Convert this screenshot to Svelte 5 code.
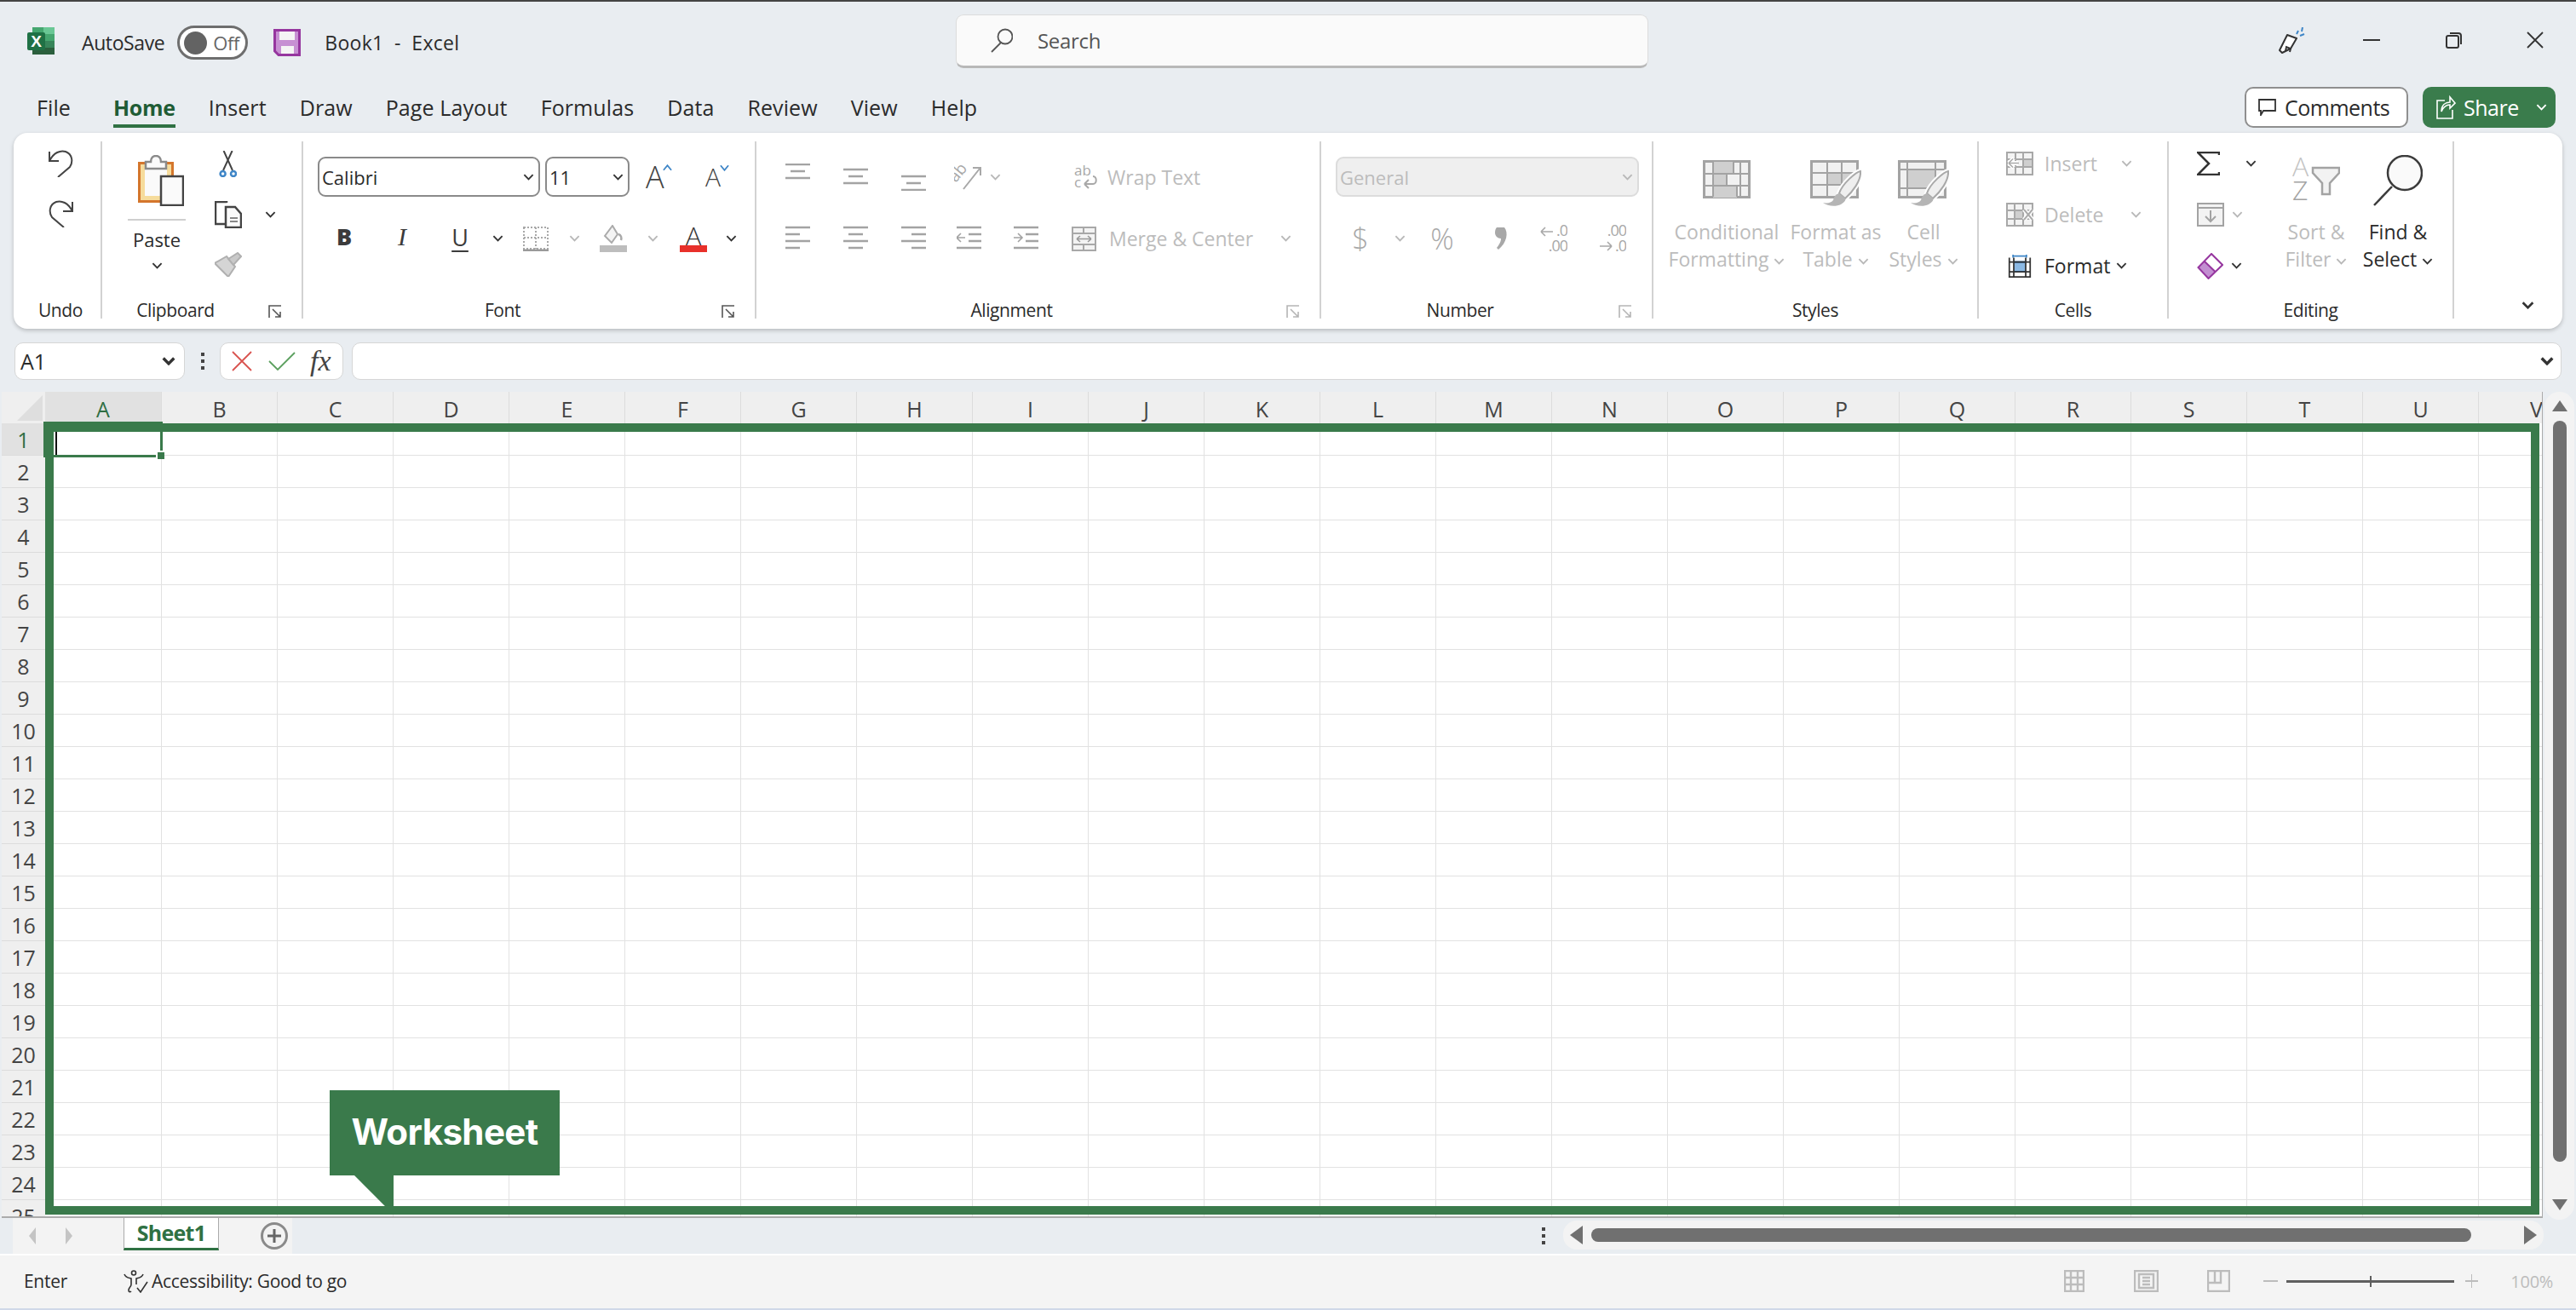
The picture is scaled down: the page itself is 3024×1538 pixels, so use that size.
<script>
  const tabs = ["File", "Home", "Insert", "Draw", "Page Layout", "Formulas", "Data", "Review", "View", "Help"];
  const cols = "ABCDEFGHIJKLMNOPQRSTUV".split("");
  const rows = Array.from({ length: 25 }, (_, i) => i + 1);

  const alignRow1 = [
    { cls: "", lines: [[0, 29, 1], [6, 23, 9], [0, 29, 17]] },
    { cls: "", lines: [[0, 29, 7], [6, 23, 15], [0, 29, 23]] },
    { cls: "", lines: [[0, 29, 15], [6, 23, 23], [0, 29, 31]] }
  ];
  const alignRow2 = [
    [[0, 29, 3], [0, 17, 11], [0, 29, 19], [0, 17, 27]],
    [[0, 29, 3], [6, 23, 11], [0, 29, 19], [6, 23, 27]],
    [[0, 29, 3], [12, 29, 11], [0, 29, 19], [12, 29, 27]]
  ];
</script>

{#snippet chev(dim = false)}
  <svg class="chev" class:dim viewBox="0 0 14 8"><polyline points="1.5,1 7,6.5 12.5,1" /></svg>
{/snippet}

{#snippet launcher()}
  <svg class="launch" viewBox="0 0 16 16"><path d="M15 1H1V15M5 5L14 14M14 8V14H8" /></svg>
{/snippet}

{#snippet lines(list)}
  {#each list as l}
    <line x1={l[0]} x2={l[1]} y1={l[2]} y2={l[2]} />
  {/each}
{/snippet}

{#snippet brush()}
  <path d="M59 13C54 14 38 27 34 39L41 45C50 37 60 24 59 13Z" fill="#f0f0f0" stroke="#fff" stroke-width="6" />
  <path d="M59 13C54 14 38 27 34 39L41 45C50 37 60 24 59 13Z" fill="#efefef" stroke="#a9a9a9" stroke-width="2" />
  <path d="M34 39C29 40 28 44 27 47C25 50 20 51 15 50C20 54 30 55 36 52C41 49 42 47 41 45Z" fill="#b5b5b5" />
{/snippet}

<div class="page">
  <div class="topline"></div>

  <header class="title">
    <div class="t-left">
      <svg class="xl" viewBox="0 0 32 32">
        <rect x="6" y="0" width="26" height="32" rx="2" fill="#33805a" />
        <rect x="19" y="0" width="13" height="8" fill="#6ac795" />
        <rect x="6" y="0" width="13" height="8" fill="#45a66f" />
        <rect x="19" y="8" width="13" height="8" fill="#45a66f" />
        <rect x="19" y="16" width="13" height="8" fill="#37855a" />
        <rect x="6" y="24" width="26" height="8" fill="#2b5f3d" />
        <rect x="0" y="6" width="21" height="21" rx="2" fill="#1f7145" />
        <text x="10.5" y="22.5" class="xl-x">X</text>
      </svg>
      <span class="autosave">AutoSave</span>
      <div class="toggle"><i></i><span>Off</span></div>
      <svg class="save" viewBox="0 0 32 32">
        <path d="M1.5 1.5H30.5V30.5H6L1.5 26Z" fill="#c790d3" stroke="#96369f" stroke-width="3" />
        <rect x="7" y="3" width="18" height="10" fill="#f5f5f5" />
        <rect x="9" y="20" width="15" height="9" fill="#f5f5f5" />
      </svg>
      <span class="book">Book1&nbsp; -&nbsp; Excel</span>
    </div>
    <div class="search">
      <svg viewBox="0 0 26 29"><circle cx="17" cy="10" r="8.5" /><line x1="12" y1="17" x2="1" y2="28" /></svg>
      <span>Search</span>
    </div>
    <div class="win">
      <svg class="pen" viewBox="0 0 31 31">
        <path d="M1 27L10 9L21 13L14 25L4 30Z" fill="#fff" stroke="#333" stroke-width="2" stroke-linejoin="round" />
        <path d="M8 28L9 23L14 25L13 29" fill="none" stroke="#333" stroke-width="2" />
        <path d="M21 8L23 4M25 10L30 8M27 5L28 0" stroke="#3f86c7" stroke-width="2" fill="none" />
      </svg>
      <svg class="min" viewBox="0 0 20 2"><line x1="0" y1="1" x2="20" y2="1" /></svg>
      <svg class="rest" viewBox="0 0 19 19">
        <rect x="1" y="4" width="14" height="14" rx="2" />
        <path d="M5 1H15C17 1 18 2 18 4V14" />
      </svg>
      <svg class="close" viewBox="0 0 20 20"><path d="M1 1L19 19M19 1L1 19" /></svg>
    </div>
  </header>

  <nav class="tabs">
    {#each tabs as t}
      <span class="tab" class:on={t === "Home"}>{t}</span>
    {/each}
    <div class="actions">
      <button class="comments">
        <svg viewBox="0 0 21 20"><path d="M1 1H20V14H6L3 19V14H1Z" /></svg>
        Comments
      </button>
      <button class="share">
        <svg viewBox="0 0 24 30"><path d="M11 7H2V28H20V18M7 20C7 12 12 9 17 9V3L23 10L17 16V12C12 12 9 15 7 20Z" /></svg>
        Share
        <svg class="chev white" viewBox="0 0 14 8"><polyline points="1.5,1 7,6.5 12.5,1" /></svg>
      </button>
    </div>
  </nav>

  <section class="ribbon">
    <div class="grp g-undo">
      <div class="tools undo-col">
        <svg viewBox="0 0 29 32"><path d="M1 2V13H12M1 13C6 3 14 0 20 2C28 5 29 14 25 20L11 32" /></svg>
        <svg viewBox="0 0 29 32"><path d="M28 2V13H17M28 13C23 3 15 0 9 2C1 5 0 14 4 20L18 32" /></svg>
      </div>
      <div class="lbl undo-lbl">Undo</div>
    </div>

    <div class="grp g-clip">
      <div class="tools clip">
        <div class="paste">
          <svg class="paste-ico" viewBox="0 0 54 60">
            <rect x="1.5" y="9.5" width="39" height="45" fill="#f6dc9c" stroke="#d4762c" stroke-width="3" />
            <rect x="8" y="16" width="26" height="32" fill="#fafafa" />
            <path d="M9 16V8H15C15 3 18 1 21 1C24 1 27 3 27 8H33V16Z" fill="#fafafa" stroke="#8a8a8a" stroke-width="2.5" />
            <rect x="27" y="25" width="26" height="34" fill="#fafafa" stroke="#444" stroke-width="2.5" />
          </svg>
          <div class="paste-line"></div>
          <span>Paste</span>
          <div class="paste-chev">{@render chev()}</div>
        </div>
        <div class="clip-col">
          <svg class="cut" viewBox="0 0 21 31">
            <path d="M5.6 0L16 23M15.6 0L5 23" fill="none" stroke="#444" stroke-width="2" />
            <circle cx="4.6" cy="27" r="3" fill="none" stroke="#3f86c7" stroke-width="2.5" />
            <circle cx="17" cy="27" r="3" fill="none" stroke="#3f86c7" stroke-width="2.5" />
          </svg>
          <div class="copy-row">
            <svg class="copy" viewBox="0 0 32 32">
              <path d="M14 2V1H1V27H12" fill="none" stroke="#444" stroke-width="2.5" />
              <path d="M13 7H24L31 15V31H13Z" fill="#fafafa" stroke="#444" stroke-width="2.5" />
              <path d="M18 20H27M18 24H27" stroke="#888" stroke-width="2" />
            </svg>
            {@render chev()}
          </div>
          <svg class="painter" viewBox="0 0 32 29">
            <path d="M0 13L14 5L24 17L16 29Z" fill="#d5d5d5" stroke="#b0b0b0" stroke-width="2" />
            <path d="M16 8L27 1L31 5L22 15Z" fill="#c9c9c9" stroke="#b0b0b0" stroke-width="2" />
          </svg>
        </div>
      </div>
      <div class="lbl pad">Clipboard</div>
      {@render launcher()}
    </div>

    <div class="grp g-font">
      <div class="tools">
        <div class="font-r1">
          <div class="select font"><span>Calibri</span>{@render chev()}</div>
          <div class="select size"><span>11</span>{@render chev()}</div>
          <div class="grow">A<svg viewBox="0 0 12 8"><polyline points="1,7 6,1 11,7" /></svg></div>
          <div class="shrink">A<svg viewBox="0 0 12 8"><polyline points="1,1 6,7 11,1" /></svg></div>
        </div>
        <div class="font-r2">
          <b class="fb">B</b>
          <i class="fi">I</i>
          <u class="fu">U</u>
          {@render chev()}
          <svg class="borders" viewBox="0 0 30 29">
            <rect x="1" y="1" width="28" height="25" fill="none" stroke="#a8a8a8" stroke-width="2" stroke-dasharray="2 2" />
            <path d="M15 1V26M1 13H29" stroke="#a8a8a8" stroke-width="2" stroke-dasharray="2 2" />
            <path d="M0 28H30" stroke="#9a9a9a" stroke-width="3" />
          </svg>
          {@render chev(true)}
          <svg class="fill" viewBox="0 0 32 32">
            <path d="M6 13L15 1L21 11L14 21Z" fill="#f4f4f4" stroke="#aaa" stroke-width="2" />
            <path d="M22 11C25 12 26 15 25 18" fill="none" stroke="#aaa" stroke-width="2.5" />
            <rect x="0" y="24" width="32" height="8" fill="#bdbdbd" />
          </svg>
          {@render chev(true)}
          <div class="fcolor"><span>A</span><i></i></div>
          {@render chev()}
        </div>
      </div>
      <div class="lbl pad">Font</div>
      {@render launcher()}
    </div>

    <div class="grp g-align dim-text">
      <div class="tools">
        <div class="al-r1">
          {#each alignRow1 as a}
            <svg class="al" viewBox="0 0 29 32">{@render lines(a.lines)}</svg>
          {/each}
          <svg class="orient" viewBox="0 0 34 30">
            <text x="2" y="22" transform="rotate(-50 2 22)" class="orient-t">ab</text>
            <path d="M11 29L30 5M22 4H31V13" fill="none" stroke="#a8a8a8" stroke-width="2" />
          </svg>
          <span class="ch1">{@render chev(true)}</span>
          <svg class="wrap-i" viewBox="0 0 28 28">
            <text x="0" y="12" class="wrap-t">ab</text>
            <text x="0" y="26" class="wrap-t">c</text>
            <path d="M12 22H22C27 22 27 13 22 13M12 22L17 17M12 22L17 27" fill="none" stroke="#a8a8a8" stroke-width="2" />
          </svg>
          <span class="wrap-l">Wrap Text</span>
        </div>
        <div class="al-r2">
          {#each alignRow2 as a}
            <svg class="al" viewBox="0 0 29 32">{@render lines(a)}</svg>
          {/each}
          <svg class="al ind1" viewBox="0 0 29 32">
            {@render lines([[0, 29, 3], [14, 29, 11], [14, 29, 19], [0, 29, 27]])}
            <path class="thin" d="M10 15H0M5 10L0 15L5 20" />
          </svg>
          <svg class="al ind2" viewBox="0 0 29 32">
            {@render lines([[14, 29, 11], [14, 29, 19], [0, 29, 3], [0, 29, 27]])}
            <path class="thin" d="M0 15H10M5 10L10 15L5 20" />
          </svg>
          <svg class="merge" viewBox="0 0 29 29">
            <rect x="1" y="1" width="27" height="27" fill="#f3f3f3" stroke="#a8a8a8" stroke-width="2" />
            <path d="M1 8H28M1 21H28M14 1V8M14 21V28" stroke="#a8a8a8" stroke-width="2" />
            <path d="M6 14.5H23M6 14.5L10 11M6 14.5L10 18M23 14.5L19 11M23 14.5L19 18" fill="none" stroke="#999" stroke-width="1.6" />
          </svg>
          <span class="merge-l">Merge &amp; Center</span>
          <span class="ch2">{@render chev(true)}</span>
        </div>
      </div>
      <div class="lbl pad">Alignment</div>
      {@render launcher()}
    </div>

    <div class="grp g-num">
      <div class="tools">
        <div class="select general"><span>General</span>{@render chev(true)}</div>
        <div class="num-r2">
          <span class="sym">$</span>
          {@render chev(true)}
          <span class="sym pct">%</span>
          <svg class="comma" viewBox="0 0 18 26"><path d="M4 0H13C18 6 16 18 6 26L4 24C8 19 9 16 9 13C5 13 2 10 2 6C2 3 3 1 4 0Z" /></svg>
          <svg class="dec" viewBox="0 0 32 32">
            <text x="32" y="13" class="dec-t" text-anchor="end">.0</text>
            <text x="32" y="31" class="dec-t" text-anchor="end">.00</text>
            <path d="M1 8H15M1 8L6 3M1 8L6 13" fill="none" stroke="#a8a8a8" stroke-width="1.6" />
          </svg>
          <svg class="dec" viewBox="0 0 32 32">
            <text x="32" y="13" class="dec-t" text-anchor="end">.00</text>
            <text x="32" y="31" class="dec-t" text-anchor="end">.0</text>
            <path d="M1 25H15M15 25L10 20M15 25L10 30" fill="none" stroke="#a8a8a8" stroke-width="1.6" />
          </svg>
        </div>
      </div>
      <div class="lbl pad">Number</div>
      {@render launcher()}
    </div>

    <div class="grp g-styles">
      <div class="tools big-row">
        <div class="big dim">
          <svg class="b-ico" width="56" height="54" viewBox="0 0 56 54">
            <rect x="1.5" y="1.5" width="53" height="42" fill="#f1f1f1" stroke="#a3a3a3" stroke-width="3" />
            <rect x="12" y="2" width="24" height="14" fill="#cfcfcf" />
            <rect x="12" y="16" width="16" height="14" fill="#cfcfcf" />
            <rect x="12" y="30" width="28" height="14" fill="#cfcfcf" />
            <path d="M12 2V43M44 2V43M1 16H55M1 30H55" stroke="#a3a3a3" stroke-width="2" fill="none" />
            <path d="M36 2V16H28V30M40 30V43" stroke="#a3a3a3" stroke-width="2" fill="none" />
          </svg>
          <div>Conditional</div>
          <div>Formatting {@render chev(true)}</div>
        </div>
        <div class="big dim">
          <svg class="b-ico" width="60" height="54" viewBox="0 0 60 54">
            <rect x="1.5" y="1.5" width="54" height="42" fill="#f1f1f1" stroke="#a3a3a3" stroke-width="3" />
            <rect x="20" y="15" width="36" height="14" fill="#cfcfcf" />
            <path d="M20 2V43M37 2V43M1 15H55M1 29H55" stroke="#a3a3a3" stroke-width="2" fill="none" />
            {@render brush()}
          </svg>
          <div>Format as</div>
          <div>Table {@render chev(true)}</div>
        </div>
        <div class="big dim">
          <svg class="b-ico" width="60" height="54" viewBox="0 0 60 54">
            <rect x="1.5" y="1.5" width="54" height="42" fill="#f1f1f1" stroke="#a3a3a3" stroke-width="3" />
            <rect x="11" y="11" width="33" height="22" fill="#cfcfcf" />
            <path d="M11 2V43M44 2V43M1 11H55M1 33H55" stroke="#a3a3a3" stroke-width="2" fill="none" />
            {@render brush()}
          </svg>
          <div>Cell</div>
          <div>Styles {@render chev(true)}</div>
        </div>
      </div>
      <div class="lbl">Styles</div>
    </div>

    <div class="grp g-cells">
      <div class="tools stack">
        <div class="line dim">
          <svg viewBox="0 0 32 28">
            <rect x="1" y="1" width="30" height="26" fill="#f3f3f3" stroke="#a8a8a8" stroke-width="2" />
            <rect x="20" y="9" width="10" height="9" fill="#cfcfcf" />
            <path d="M11 1V27M20 1V27M1 9H31M1 18H31" stroke="#a8a8a8" stroke-width="2" />
            <path d="M14 13.5H3M3 13.5L9 8M3 13.5L9 19" fill="none" stroke="#fff" stroke-width="5" />
            <path d="M15 13.5H3M3 13.5L8 8.5M3 13.5L8 18.5" fill="none" stroke="#aaa" stroke-width="1.6" />
          </svg>
          <span>Insert</span><span class="c-i ins">{@render chev(true)}</span>
        </div>
        <div class="line dim">
          <svg viewBox="0 0 32 28">
            <path d="M1 1H31V27H1Z" fill="#f3f3f3" stroke="#a8a8a8" stroke-width="2" />
            <rect x="10" y="9" width="9" height="10" fill="#cfcfcf" />
            <path d="M10 1V27M20 1V27M1 9H31M1 19H31" stroke="#a8a8a8" stroke-width="2" />
            <path d="M21 8L31 20M31 8L21 20" fill="none" stroke="#fff" stroke-width="5" />
            <path d="M21 8L31 20M31 8L21 20" fill="none" stroke="#aaa" stroke-width="2" />
          </svg>
          <span>Delete</span><span class="c-i">{@render chev(true)}</span>
        </div>
        <div class="line">
          <svg class="fmt" viewBox="0 0 32 32">
            <path d="M7 1V5M25 1V5M7 3H25" fill="none" stroke="#3f86c7" stroke-width="2" />
            <rect x="8" y="11" width="16" height="13" fill="#8bb9e4" />
            <path d="M8 11H24M8 24H24" stroke="#2b6cb0" stroke-width="2.5" />
            <path d="M2 5V31H30V5M1 11H31M1 24H31M8 5V31M24 5V31" fill="none" stroke="#333" stroke-width="2" />
          </svg>
          <span>Format</span><span class="c-f">{@render chev()}</span>
        </div>
      </div>
      <div class="lbl">Cells</div>
    </div>

    <div class="grp g-edit">
      <div class="tools edit-row">
        <div class="stack edit-col">
          <div class="line">
            <svg class="sig" viewBox="0 0 27 28"><path d="M26 4V1H1L14 14L1 27H26V24" /></svg>
            <span class="c-s">{@render chev()}</span>
          </div>
          <div class="line">
            <svg viewBox="0 0 32 28">
              <rect x="1" y="1" width="30" height="26" fill="#f3f3f3" stroke="#a3a3a3" stroke-width="2" />
              <path d="M1 6H31" stroke="#a3a3a3" stroke-width="2" />
              <path d="M16 9V22M10 16L16 22L22 16" fill="none" stroke="#a3a3a3" stroke-width="2" />
            </svg>
            <span class="c-e">{@render chev(true)}</span>
          </div>
          <div class="line">
            <svg class="eraser" viewBox="0 0 31 31">
              <path d="M1.5 17L8.5 9.5L21.5 22L13.5 30Z" fill="#c28ed1" />
              <path d="M17 1L30 14L13.5 30L1.5 17ZM8.5 9.5L21.5 22" fill="none" stroke="#96369f" stroke-width="2" />
            </svg>
            <span class="c-e">{@render chev()}</span>
          </div>
        </div>
        <div class="big dim sort">
          <svg class="b-ico" width="56" height="54" viewBox="0 0 56 54">
            <text x="0" y="23" class="az a">A</text>
            <text x="0" y="51" class="az z">Z</text>
            <path d="M24 13H55V19L44 31V44H35V31L24 19Z" fill="#f2f2f2" stroke="#a3a3a3" stroke-width="2.5" />
          </svg>
          <div>Sort &amp;</div>
          <div>Filter {@render chev(true)}</div>
        </div>
        <div class="big findsel">
          <svg class="b-ico" width="58" height="60" viewBox="0 0 58 60">
            <circle cx="37" cy="21" r="20" fill="#fafafa" stroke="#3b3b3b" stroke-width="2.5" />
            <line x1="22" y1="37" x2="1" y2="59" stroke="#3b3b3b" stroke-width="2.5" />
          </svg>
          <div>Find &amp;</div>
          <div>Select {@render chev()}</div>
        </div>
      </div>
      <div class="lbl">Editing</div>
    </div>

    <div class="collapse">
      <svg class="chev big-chev" viewBox="0 0 14 8"><polyline points="1.5,1 7,6.5 12.5,1" /></svg>
    </div>
  </section>

  <div class="fbar">
    <div class="namebox"><span>A1</span>{@render chev()}</div>
    <div class="fdots"><i></i><i></i><i></i></div>
    <div class="fbtns">
      <svg viewBox="0 0 24 24"><path d="M1 1L23 23M23 1L1 23" stroke="#d9534f" /></svg>
      <svg class="ok" viewBox="0 0 32 22"><path d="M1 11L11 21L31 1" stroke="#5ca05f" /></svg>
      <span class="fx">fx</span>
    </div>
    <div class="finput">{@render chev()}</div>
  </div>

  <div class="sheet">
    <div class="grid">
      <div class="hdr">
        <div class="corner"><svg viewBox="0 0 30 30"><path d="M30 0V30H0Z" /></svg></div>
        {#each cols as c}
          <div class="ch" class:sel={c === "A"} class:first={c === "A"} class:last={c === "V"}>{c}</div>
        {/each}
      </div>
      {#each rows as r}
        <div class="row">
          <div class="rh" class:sel={r === 1}>{r}</div>
          {#each cols as c}
            <div class="cell" class:first={c === "A"} class:last={c === "V"}></div>
          {/each}
        </div>
      {/each}

      <div class="frame"></div>
      <div class="active"><i class="caret"></i><i class="handle"></i></div>
      <div class="callout">Worksheet</div>
    </div>
    <div class="vscroll">
      <svg viewBox="0 0 18 13"><path d="M9 0L18 13H0Z" /></svg>
      <div class="vthumb"></div>
      <svg class="down" viewBox="0 0 18 13"><path d="M0 0H18L9 13Z" /></svg>
    </div>
  </div>

  <div class="sheetbar">
    <div class="sheetnav">
      <svg class="nav" viewBox="0 0 8 20"><path d="M8 0V20L0 10Z" /></svg>
      <svg class="nav next" viewBox="0 0 8 20"><path d="M0 0V20L8 10Z" /></svg>
      <div class="sheettab">Sheet1</div>
      <div class="addsheet"><svg viewBox="0 0 16 16"><path d="M8 0V16M0 8H16" /></svg></div>
    </div>
    <div class="sdots"><i></i><i></i><i></i></div>
    <div class="hscroll">
      <svg viewBox="0 0 15 22"><path d="M15 0V22L0 11Z" /></svg>
      <div class="hthumb"></div>
      <svg viewBox="0 0 15 22"><path d="M0 0V22L15 11Z" /></svg>
    </div>
  </div>

  <footer class="status">
    <span class="enter">Enter</span>
    <svg class="acc" viewBox="0 0 30 27">
      <circle cx="13" cy="3.5" r="2.5" />
      <path d="M2 5C4 10 8 9 10 10V17C10 20 7 20 7 24C7 26 9 26 10 25M24 5C22 10 18 9 16 10V17" />
      <path d="M17 21L21 26L29 14" />
    </svg>
    <span>Accessibility: Good to go</span>
    <div class="views">
      <svg viewBox="0 0 24 26"><path d="M1 1H23V25H1ZM1 9H23M1 17H23M8 1V25M16 1V25" /></svg>
      <svg viewBox="0 0 29 26"><path d="M1 1H28V25H1ZM6 5H23V21H6ZM10 9H19M10 13H19M10 17H19" /></svg>
      <svg viewBox="0 0 27 26"><path d="M1 1H26V25H1ZM1 15H16V1M9 1V15" /></svg>
      <div class="zoom">
        <i class="zm"></i>
        <div class="zslider"><i></i></div>
        <i class="zm plus"></i>
      </div>
      <span class="pct100">100%</span>
    </div>
  </footer>
  <div class="bottomline"></div>
</div>

<style>
  :global(body) {
    margin: 0;
    background: #e9edf1;
  }

  .page {
    width: 3024px;
    height: 1538px;
    display: flex;
    flex-direction: column;
    overflow: hidden;
    background: #e9edf1;
    color: #2b2b2b;
    font-family: "Open Sans", "Noto Sans", sans-serif;
    font-size: 23px;
    letter-spacing: 0;
  }

  svg {
    display: block;
    flex: none;
  }

  .topline {
    height: 2px;
    background: #444;
  }

  /* title bar */
  .title {
    height: 96px;
    display: grid;
    grid-template-columns: 1122px 813px 1fr;
    align-items: center;
  }

  .t-left {
    display: flex;
    align-items: center;
    padding-left: 32px;
    font-size: 23px;
  }

  .xl {
    width: 32px;
    height: 32px;
    margin-bottom: 4px;
  }

  .xl-x {
    fill: #fff;
    font-family: "Liberation Sans", sans-serif;
    font-size: 19px;
    font-weight: 700;
    text-anchor: middle;
  }

  .autosave {
    margin-left: 32px;
    letter-spacing: -0.4px;
  }

  .toggle {
    margin-left: 15px;
    width: 83px;
    height: 40px;
    box-sizing: border-box;
    border: 3px solid #6e6e6e;
    border-radius: 20px;
    background: #fff;
    display: flex;
    align-items: center;
    padding-left: 5px;
    color: #666;
    font-size: 22px;
    letter-spacing: -0.4px;
  }

  .toggle i {
    width: 27px;
    height: 27px;
    border-radius: 50%;
    background: #636363;
    margin-right: 7px;
  }

  .save {
    width: 32px;
    height: 32px;
    margin-left: 30px;
  }

  .book {
    margin-left: 28px;
    letter-spacing: 0.3px;
  }

  .search {
    height: 63px;
    margin-bottom: 4px;
    box-sizing: border-box;
    background: #fafafa;
    border: 1px solid #dcdcdc;
    border-bottom: 3px solid #b8b8b8;
    border-radius: 9px;
    display: flex;
    align-items: center;
    padding-left: 40px;
    color: #555;
    font-size: 24px;
    letter-spacing: -0.3px;
  }

  .search svg {
    width: 26px;
    height: 29px;
    margin-right: 29px;
    fill: none;
    stroke: #555;
    stroke-width: 1.8;
  }

  .win {
    display: flex;
    justify-content: flex-end;
    align-items: center;
    padding-right: 38px;
    margin-bottom: 6px;
  }

  .pen {
    width: 31px;
    height: 31px;
  }

  .min {
    width: 20px;
    height: 2px;
    margin-left: 68px;
    stroke: #333;
    stroke-width: 2;
  }

  .rest {
    width: 19px;
    height: 19px;
    margin-left: 77px;
    fill: none;
    stroke: #333;
    stroke-width: 2;
  }

  .close {
    width: 20px;
    height: 20px;
    margin-left: 76px;
    fill: none;
    stroke: #333;
    stroke-width: 1.8;
  }

  /* tabs */
  .tabs {
    height: 58px;
    display: flex;
    align-items: flex-start;
    font-size: 25px;
  }

  .tab {
    line-height: 30px;
    padding-top: 13px;
    padding-bottom: 5px;
    margin-left: 39px;
    letter-spacing: 0.1px;
  }

  .tab:first-child {
    margin-left: 43px;
  }

  .tab.on {
    color: #1f5c35;
    font-weight: 700;
    border-bottom: 4px solid #2f7143;
    letter-spacing: -0.3px;
    margin-left: 50px;
  }

  .actions {
    margin-left: auto;
    margin-right: 24px;
    margin-top: 4px;
    display: flex;
    gap: 17px;
  }

  .actions button {
    height: 48px;
    display: flex;
    align-items: center;
    padding: 0;
    font: inherit;
    letter-spacing: -0.5px;
    border-radius: 10px;
  }

  .comments {
    width: 192px;
    background: #fff;
    border: 2px solid #8f8f8f;
    color: #2b2b2b;
    padding-left: 14px !important;
  }

  .comments svg {
    width: 21px;
    height: 20px;
    margin-right: 10px;
    fill: none;
    stroke: #333;
    stroke-width: 1.8;
  }

  .share {
    width: 156px;
    background: #3a7c4c;
    border: none;
    color: #fff;
    padding-left: 15px !important;
  }

  .share svg:first-child {
    width: 24px;
    height: 30px;
    margin-right: 9px;
    fill: none;
    stroke: #fff;
    stroke-width: 1.6;
  }

  /* ribbon */
  .ribbon {
    height: 230px;
    box-sizing: border-box;
    margin: 0 16px;
    padding-top: 10px;
    background: #fff;
    border-radius: 16px;
    box-shadow: 0 2px 5px rgba(0, 0, 0, 0.22);
    display: flex;
  }

  .grp {
    position: relative;
    height: 208px;
    box-sizing: border-box;
    border-right: 2px solid #d2d2d2;
    display: flex;
    flex-direction: column;
    flex: none;
  }

  .tools {
    flex: 1;
    min-height: 0;
  }

  .lbl {
    height: 24px;
    line-height: 24px;
    margin-bottom: -2px;
    text-align: center;
    font-size: 21px;
    letter-spacing: -0.4px;
    color: #2b2b2b;
  }

  .lbl.pad {
    padding-right: 62px;
  }

  .undo-lbl {
    padding-left: 8px;
  }

  .launch {
    position: absolute;
    right: 23px;
    bottom: 0;
    width: 16px;
    height: 16px;
    fill: none;
    stroke: #555;
    stroke-width: 1.6;
  }

  .g-align .launch,
  .g-num .launch {
    stroke: #b5b5b5;
  }

  .chev {
    width: 13px;
    height: 8px;
    fill: none;
    stroke: #333;
    stroke-width: 2;
    flex: none;
  }

  .chev.dim {
    stroke: #b8b8b8;
  }

  .chev.white {
    stroke: #fff;
    margin-left: 20px;
  }

  .g-undo {
    width: 104px;
  }

  .undo-col {
    padding: 10px 0 0 41px;
    display: flex;
    flex-direction: column;
    gap: 27px;
  }

  .undo-col svg {
    width: 29px;
    height: 32px;
    fill: none;
    stroke: #444;
    stroke-width: 2;
  }

  .g-clip {
    width: 236px;
  }

  .clip {
    display: flex;
  }

  .paste {
    width: 68px;
    margin-left: 30px;
    padding-top: 16px;
    display: flex;
    flex-direction: column;
    align-items: center;
  }

  .paste-ico {
    width: 54px;
    height: 60px;
    align-self: flex-start;
    margin-left: 12px;
  }

  .paste-line {
    align-self: stretch;
    height: 2px;
    margin: 15px 0 10px;
    background: #cfcfcf;
  }

  .paste span {
    line-height: 24px;
    font-size: 22px;
  }

  .paste-chev {
    margin-top: 15px;
  }

  .clip-col {
    margin-left: 34px;
    padding-top: 11px;
    display: flex;
    flex-direction: column;
  }

  .cut {
    width: 21px;
    height: 31px;
    margin-left: 5px;
  }

  .copy-row {
    display: flex;
    align-items: center;
    margin-top: 28px;
  }

  .copy {
    width: 32px;
    height: 32px;
    margin-right: 27px;
  }

  .painter {
    width: 32px;
    height: 29px;
    margin-top: 28px;
  }

  .g-font {
    width: 532px;
  }

  .font-r1 {
    display: flex;
    align-items: center;
    height: 47px;
    margin-top: 18px;
    padding-left: 17px;
  }

  .select {
    height: 47px;
    box-sizing: border-box;
    border: 2px solid #8a8a8a;
    border-radius: 9px;
    display: flex;
    align-items: center;
    justify-content: space-between;
    padding: 0 5px 0 3px;
    font-size: 22px;
  }

  .font {
    width: 261px;
  }

  .size {
    width: 99px;
    margin-left: 6px;
  }

  .grow,
  .shrink {
    position: relative;
    color: #444;
    font-weight: 300;
    font-size: 36px;
    line-height: 36px;
    letter-spacing: 0;
    margin-left: 19px;
    width: 31px;
  }

  .shrink {
    font-size: 30px;
    margin-left: 39px;
    width: 28px;
  }

  .grow svg,
  .shrink svg {
    position: absolute;
    top: 3px;
    right: 0;
    width: 11px;
    height: 8px;
    fill: none;
    stroke: #3f86c7;
    stroke-width: 2;
  }

  .font-r2 {
    display: grid;
    grid-template-columns: 68px 68px 68px 20px 70px 20px 72px 20px 76px 12px;
    grid-template-rows: 32px;
    justify-items: center;
    align-items: center;
    height: 32px;
    margin-top: 33px;
    padding-left: 14px;
    color: #3b3b3b;
  }

  .fb {
    font-size: 27px;
    font-weight: 800;
    margin-bottom: 5px;
  }

  .fi {
    font-family: "Liberation Serif", serif;
    font-size: 30px;
    margin-bottom: 5px;
  }

  .fu {
    font-size: 27px;
    text-underline-offset: 5px;
    margin-bottom: 3px;
  }

  .borders {
    width: 30px;
    height: 29px;
  }

  .fill {
    width: 32px;
    height: 32px;
  }

  .fcolor {
    width: 32px;
    height: 32px;
    position: relative;
    font-size: 32px;
    line-height: 26px;
    text-align: center;
    font-weight: 300;
    letter-spacing: 0;
  }

  .fcolor i {
    position: absolute;
    left: 0;
    right: 0;
    bottom: 0;
    height: 8px;
    background: #e8302a;
  }

  .dim {
    color: #bcbcbc;
  }

  .g-align {
    width: 663px;
    color: #bcbcbc;
  }

  .g-align .lbl,
  .g-num .lbl {
    color: #2b2b2b;
  }

  .al {
    width: 29px;
    height: 32px;
    stroke: #a3a3a3;
    stroke-width: 2.5;
    margin-right: 39px;
  }

  .al .thin {
    fill: none;
    stroke-width: 1.6;
  }

  .al-r1,
  .al-r2 {
    display: flex;
    align-items: center;
    height: 32px;
    padding-left: 34px;
  }

  .al-r1 {
    margin-top: 26px;
  }

  .al-r2 {
    margin-top: 40px;
  }

  .orient {
    width: 34px;
    height: 30px;
    margin-left: -6px;
  }

  .orient-t {
    fill: #a8a8a8;
    font-size: 19px;
  }

  .wrap-t {
    fill: #a8a8a8;
    font-size: 17px;
  }

  .ch1 {
    margin-left: 8px;
  }

  .wrap-i {
    width: 28px;
    height: 28px;
    margin-left: 86px;
  }

  .wrap-l {
    margin-left: 11px;
  }

  .ind1 {
    margin-left: -3px;
    margin-right: 38px;
  }

  .ind2 {
    margin-right: 39px;
  }

  .merge {
    width: 29px;
    height: 29px;
  }

  .merge-l {
    margin-left: 15px;
    white-space: nowrap;
  }

  .ch2 {
    margin-left: 32px;
  }

  .g-num {
    width: 390px;
  }

  .general {
    width: 356px;
    margin: 18px 0 0 17px;
    background: #efefef;
    border-color: #dcdcdc;
    color: #bcbcbc;
  }

  .num-r2 {
    display: grid;
    grid-template-columns: 68px 24px 76px 62px 62px 76px;
    grid-template-rows: 32px;
    justify-items: center;
    align-items: center;
    height: 32px;
    margin-top: 33px;
    padding-left: 12px;
  }

  .sym {
    color: #a8a8a8;
    font-size: 34px;
    font-weight: 300;
    line-height: 32px;
    letter-spacing: 0;
  }

  .comma {
    width: 18px;
    height: 26px;
    fill: #a8a8a8;
  }

  .dec {
    width: 32px;
    height: 32px;
  }

  .dec-t {
    fill: #a8a8a8;
    font-size: 18px;
    letter-spacing: -1px;
  }

  .g-styles {
    width: 382px;
  }

  .big-row {
    display: grid;
    grid-template-columns: 142px 114px 92px;
    padding-left: 15px;
  }

  .big {
    padding-top: 22px;
    text-align: center;
    line-height: 32px;
    white-space: nowrap;
  }

  .big .chev {
    display: inline-block;
    vertical-align: middle;
  }

  .b-ico {
    margin: 0 auto 14px;
  }

  .g-cells {
    width: 223px;
  }

  .stack {
    display: flex;
    flex-direction: column;
    gap: 4px;
    margin-top: -2px;
  }

  .g-cells .stack {
    padding-left: 32px;
  }

  .line {
    height: 56px;
    display: flex;
    align-items: center;
  }

  .line > svg:first-child {
    width: 32px;
    height: 28px;
    margin-right: 13px;
  }

  .line > .fmt {
    height: 32px;
  }

  .c-i {
    margin-left: 32px;
  }

  .c-i.ins {
    margin-left: 28px;
  }

  .c-f {
    margin-left: 7px;
  }

  .g-edit {
    width: 335px;
  }

  .edit-row {
    display: flex;
    padding-left: 33px;
  }

  .edit-col {
    width: 93px;
    flex: none;
  }

  .edit-col .line > svg:first-child {
    margin-right: 0;
  }

  .edit-col .line > .sig {
    fill: none;
    stroke: #333;
    stroke-width: 2.5;
    width: 27px;
  }

  .edit-col .line > .eraser {
    width: 31px;
    height: 31px;
  }

  .c-s {
    margin-left: 30px;
  }

  .c-e {
    margin-left: 9px;
  }

  .sort {
    width: 94px;
    flex: none;
    padding-top: 18px;
  }

  .sort .b-ico {
    margin-bottom: 18px;
  }

  .findsel {
    width: 98px;
    flex: none;
    padding-top: 16px;
  }

  .az {
    font-size: 32px;
    font-weight: 300;
    letter-spacing: 0;
  }

  .az.a {
    fill: #c4c4c4;
  }

  .az.z {
    fill: #a3a3a3;
  }

  .collapse {
    flex: 1;
    height: 208px;
    box-sizing: border-box;
    display: flex;
    align-items: flex-end;
    justify-content: flex-end;
    padding: 0 33px 11px 0;
  }

  .big-chev {
    width: 15px;
    height: 9px;
    stroke-width: 2.5;
  }

  /* formula bar */
  .fbar {
    height: 74px;
    box-sizing: border-box;
    padding: 16px 17px 14px;
    display: flex;
    align-items: stretch;
  }

  .namebox,
  .fbtns,
  .finput {
    background: #fff;
    border: 1px solid #d6d6d6;
    border-radius: 10px;
    box-sizing: border-box;
    display: flex;
    align-items: center;
  }

  .namebox {
    width: 200px;
    justify-content: space-between;
    padding: 0 10px 0 6px;
    font-size: 25px;
    letter-spacing: 0;
  }

  .namebox .chev,
  .finput .chev {
    width: 16px;
    height: 10px;
    stroke-width: 3;
  }

  .fdots {
    width: 41px;
    display: flex;
    flex-direction: column;
    justify-content: center;
    align-items: center;
    gap: 4px;
  }

  .fdots i,
  .sdots i {
    width: 4px;
    height: 4px;
    background: #444;
    display: block;
  }

  .fbtns {
    width: 145px;
    padding-left: 13px;
  }

  .fbtns svg {
    width: 24px;
    height: 24px;
    fill: none;
    stroke-width: 1.8;
  }

  .fbtns .ok {
    width: 32px;
    height: 22px;
    margin-left: 19px;
  }

  .fx {
    margin-left: 17px;
    font-family: "Liberation Serif", serif;
    font-style: italic;
    font-size: 34px;
    line-height: 34px;
    letter-spacing: 0;
    color: #444;
  }

  .finput {
    flex: 1;
    margin-left: 10px;
    justify-content: flex-end;
    padding-right: 8px;
  }

  /* worksheet */
  .sheet {
    height: 970px;
    display: flex;
    padding-left: 2px;
  }

  .grid {
    position: relative;
    width: 2983px;
    height: 970px;
    box-sizing: border-box;
    overflow: hidden;
    background: #fff;
    border-bottom: 2px solid #ababab;
    border-right: 1px solid #ababab;
    color: #444;
    font-size: 25px;
    letter-spacing: 0;
  }

  .hdr,
  .row {
    display: flex;
  }

  .hdr {
    height: 37px;
    background: #efefef;
  }

  .corner {
    width: 51px;
    flex: none;
    box-sizing: border-box;
    padding: 4px 3px 3px 18px;
  }

  .corner svg {
    width: 30px;
    height: 30px;
    fill: #dedede;
  }

  .ch {
    width: 136px;
    flex: none;
    box-sizing: border-box;
    border-right: 1px solid #dcdcdc;
    text-align: center;
    line-height: 40px;
  }

  .ch.first,
  .cell.first {
    width: 137px;
  }

  .ch.last,
  .cell.last {
    width: 75px;
    border-right: none;
  }

  .ch.last {
    text-align: right;
    padding-right: 0;
  }

  .ch.sel,
  .rh.sel {
    background: #e1e1e1;
    color: #2f6e43;
  }

  .row {
    height: 38px;
  }

  .rh {
    width: 51px;
    flex: none;
    box-sizing: border-box;
    background: #efefef;
    border-bottom: 1px solid #dcdcdc;
    text-align: center;
    line-height: 38px;
  }

  .cell {
    width: 136px;
    flex: none;
    box-sizing: border-box;
    border-right: 1px solid #e2e2e2;
    border-bottom: 1px solid #e2e2e2;
  }

  .frame {
    position: absolute;
    left: 51px;
    top: 37px;
    width: 2928px;
    height: 929px;
    box-sizing: border-box;
    border: 10px solid #3a7a4b;
  }

  .active {
    position: absolute;
    left: 49px;
    top: 35px;
    width: 140px;
    height: 42px;
    box-sizing: border-box;
    border: 3px solid #3a7a4b;
  }

  .caret {
    position: absolute;
    left: 11px;
    top: 9px;
    width: 2px;
    height: 27px;
    background: #111;
  }

  .handle {
    position: absolute;
    right: -5px;
    bottom: -5px;
    width: 8px;
    height: 8px;
    background: #3a7a4b;
    border-left: 2px solid #fff;
    border-top: 2px solid #fff;
  }

  .callout {
    position: absolute;
    left: 385px;
    top: 820px;
    width: 270px;
    height: 100px;
    background: #3a7a4b;
    color: #fff;
    font-family: "Inter", sans-serif;
    font-weight: 700;
    font-size: 42px;
    letter-spacing: -0.6px;
    text-align: center;
    line-height: 98px;
  }

  .callout::after {
    content: "";
    position: absolute;
    left: 29px;
    top: 100px;
    width: 46px;
    height: 36px;
    background: #3a7a4b;
    clip-path: polygon(0 0, 100% 0, 100% 100%, 78% 100%);
  }

  .vscroll {
    width: 35px;
    height: 972px;
    margin-left: 2px;
    box-sizing: border-box;
    border-radius: 18px;
    background: #f3f3f3;
    padding-top: 10px;
    display: flex;
    flex-direction: column;
    align-items: center;
  }

  .vscroll svg {
    width: 18px;
    height: 13px;
    fill: #707070;
  }

  .vthumb {
    width: 16px;
    height: 870px;
    margin-top: 11px;
    border-radius: 8px;
    background: #707070;
  }

  .vscroll .down {
    margin-top: 44px;
  }

  /* sheet tabs */
  .sheetbar {
    height: 42px;
    display: flex;
  }

  .sheetnav {
    width: 328px;
    margin-left: 15px;
    background: #f3f3f3;
    display: flex;
    align-items: center;
  }

  .nav {
    width: 8px;
    height: 20px;
    margin-left: 19px;
    fill: #c4c4c4;
  }

  .nav.next {
    margin-left: 35px;
  }

  .sheettab {
    margin-left: 60px;
    align-self: flex-start;
    width: 112px;
    height: 38px;
    box-sizing: border-box;
    background: #fff;
    border: 1px solid #ababab;
    border-top: none;
    border-bottom: 3px solid #2f7143;
    color: #2f7143;
    font-weight: 700;
    font-size: 25px;
    letter-spacing: -0.7px;
    text-align: center;
    line-height: 34px;
  }

  .addsheet {
    width: 32px;
    height: 32px;
    margin-left: 49px;
    box-sizing: border-box;
    border: 3px solid #8a8a8a;
    border-radius: 50%;
    display: flex;
    align-items: center;
    justify-content: center;
  }

  .addsheet svg {
    width: 16px;
    height: 16px;
    stroke: #666;
    stroke-width: 3;
  }

  .sdots {
    width: 10px;
    margin-left: 1464px;
    display: flex;
    flex-direction: column;
    justify-content: center;
    align-items: center;
    gap: 4px;
  }

  .hscroll {
    width: 1151px;
    height: 34px;
    margin: 3px 0 0 18px;
    box-sizing: border-box;
    background: #f3f3f3;
    border-radius: 16px;
    display: flex;
    align-items: center;
    padding-left: 8px;
  }

  .hscroll svg {
    width: 15px;
    height: 22px;
    fill: #707070;
  }

  .hthumb {
    width: 1033px;
    height: 16px;
    margin: 0 62px 0 10px;
    border-radius: 8px;
    background: #707070;
  }

  /* status bar */
  .status {
    height: 64px;
    box-sizing: border-box;
    border-top: 2px solid #fff;
    background: #f4f4f4;
    display: flex;
    align-items: center;
    padding: 0 27px 2px 28px;
    font-size: 21px;
    letter-spacing: -0.3px;
  }

  .enter {
    width: 116px;
  }

  .acc {
    width: 30px;
    height: 27px;
    margin-right: 4px;
    fill: none;
    stroke: #333;
    stroke-width: 1.6;
  }

  .views {
    margin-left: auto;
    display: flex;
    align-items: center;
    color: #bcbcbc;
    font-size: 20px;
  }

  .views svg {
    height: 26px;
    fill: none;
    stroke: #bcbcbc;
    stroke-width: 2.4;
  }

  .views svg:nth-child(1) {
    width: 24px;
    margin-right: 58px;
  }

  .views svg:nth-child(2) {
    width: 29px;
    margin-right: 57px;
  }

  .views svg:nth-child(3) {
    width: 27px;
  }

  .zoom {
    display: flex;
    align-items: center;
    margin-left: 39px;
  }

  .zm {
    width: 17px;
    height: 2px;
    background: #bcbcbc;
    position: relative;
  }

  .zm.plus {
    width: 15px;
  }

  .zm.plus::after {
    content: "";
    position: absolute;
    left: 7px;
    top: -7px;
    width: 1px;
    height: 16px;
    background: #bcbcbc;
  }

  .zslider {
    width: 197px;
    height: 3px;
    margin: 0 13px 0 10px;
    background: #5f5f5f;
    position: relative;
  }

  .zslider i {
    position: absolute;
    left: 98px;
    top: -5px;
    width: 2px;
    height: 13px;
    background: #5f5f5f;
  }

  .pct100 {
    margin-left: 38px;
  }

  .bottomline {
    height: 2px;
    background: #cfd8e8;
  }
</style>
